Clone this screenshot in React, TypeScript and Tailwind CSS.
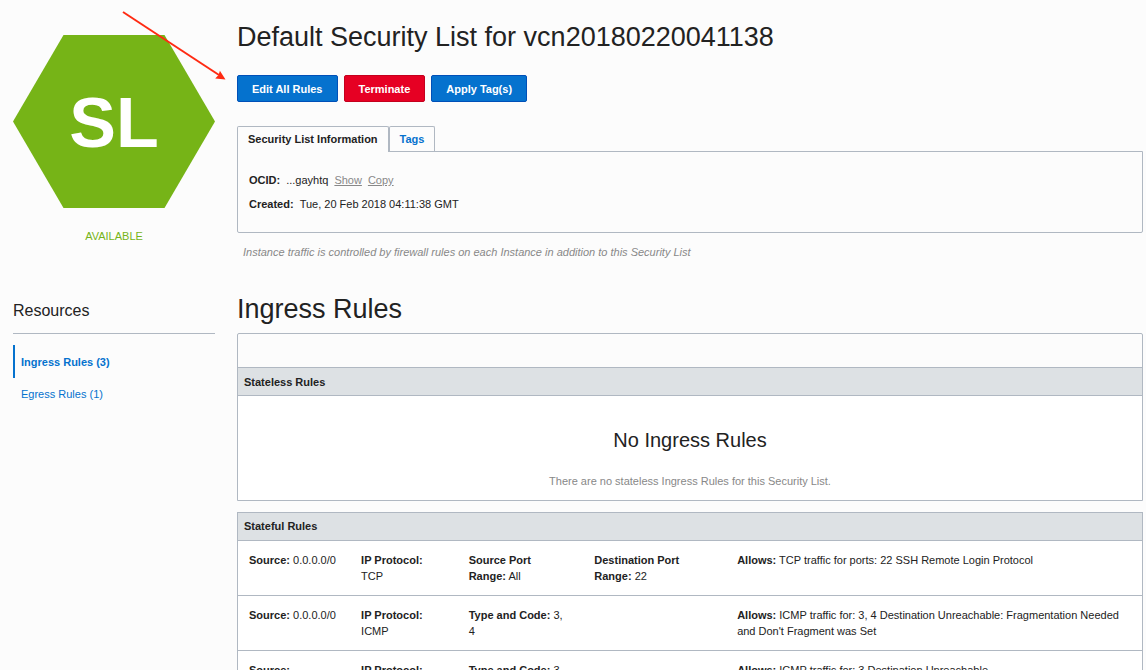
import type { ReactNode } from "react";

type Field = { label: string; value?: string } | null;

const statefulRules: Field[][] = [
  [
    { label: "Source:", value: "0.0.0.0/0" },
    { label: "IP Protocol:", value: "TCP" },
    { label: "Source Port Range:", value: "All" },
    { label: "Destination Port Range:", value: "22" },
    { label: "Allows:", value: "TCP traffic for ports: 22 SSH Remote Login Protocol" },
  ],
  [
    { label: "Source:", value: "0.0.0.0/0" },
    { label: "IP Protocol:", value: "ICMP" },
    { label: "Type and Code:", value: "3, 4" },
    null,
    {
      label: "Allows:",
      value:
        "ICMP traffic for: 3, 4 Destination Unreachable: Fragmentation Needed and Don't Fragment was Set",
    },
  ],
  [
    { label: "Source:" },
    { label: "IP Protocol:" },
    { label: "Type and Code:", value: "3" },
    null,
    { label: "Allows:", value: "ICMP traffic for: 3 Destination Unreachable" },
  ],
];

function ActionButton({ danger = false, children }: { danger?: boolean; children: ReactNode }) {
  return (
    <button
      type="button"
      className={
        danger
          ? "h-[27px] rounded-xs border border-[#c4001d] bg-[#e60023] px-[14px] font-bold text-white"
          : "h-[27px] rounded-xs border border-[#0050b8] bg-[#0572ce] px-[14px] font-bold text-white"
      }
    >
      {children}
    </button>
  );
}

function Sidebar() {
  return (
    <aside className="w-[202px] shrink-0 pt-[35px]">
      <div className="grid place-items-center">
        <svg viewBox="0 0 202 173" className="col-start-1 row-start-1 block w-full" aria-hidden="true">
          <path d="M0 86.5 50.5 0h101L202 86.5 151.5 173h-101z" fill="#76b417" />
        </svg>
        <span className="col-start-1 row-start-1 pt-0.5 text-[70px] leading-[70px] font-bold text-white">SL</span>
      </div>
      <p className="mt-5 text-center text-[#76b417]">AVAILABLE</p>
      <h2 className="mt-[55px] border-b border-[#b0b8c2] pb-[11px] text-base leading-[23px]">Resources</h2>
      <nav className="mt-[11px] flex flex-col text-[#0572ce]">
        <a href="#ingress" className="border-l-2 border-[#0572ce] pt-[9px] pb-2 pl-1.5 font-bold">
          Ingress Rules (3)
        </a>
        <a href="#egress" className="border-l-2 border-transparent py-2 pl-1.5">
          Egress Rules (1)
        </a>
      </nav>
    </aside>
  );
}

function Information() {
  return (
    <section className="mt-6">
      <div className="flex" role="tablist">
        <button
          type="button"
          role="tab"
          aria-selected="true"
          className="z-10 h-[26px] rounded-t-xs border border-b-0 border-[#b0b8c2] bg-[#fcfcfc] px-2.5 pb-px font-bold"
        >
          Security List Information
        </button>
        <button
          type="button"
          role="tab"
          aria-selected="false"
          className="h-[25px] rounded-t-xs border border-b-0 border-[#b0b8c2] px-2.5 font-bold text-[#0572ce]"
        >
          Tags
        </button>
      </div>
      <div className="-mt-px flex flex-col gap-2 rounded-b-xs border border-[#b0b8c2] px-[11px] py-5">
        <p className="flex gap-1.5">
          <strong>OCID:</strong>
          <span>...gayhtq</span>
          <a href="#show" className="text-[#888] underline">Show</a>
          <a href="#copy" className="text-[#888] underline">Copy</a>
        </p>
        <p className="flex gap-1.5">
          <strong>Created:</strong>
          <span>Tue, 20 Feb 2018 04:11:38 GMT</span>
        </p>
      </div>
    </section>
  );
}

function StatefulRules() {
  return (
    <div className="mt-[11px] border border-[#b0b8c2] bg-white">
      <table className="w-full table-fixed border-separate border-spacing-0">
        <colgroup>
          <col className="w-[12.4%]" />
          <col className="w-[11.9%]" />
          <col className="w-[13.9%]" />
          <col className="w-[15.8%]" />
          <col />
        </colgroup>
        <thead>
          <tr>
            <th
              colSpan={5}
              className="border-b border-[#b0b8c2] bg-[#dde1e4] px-1.5 pt-[5px] pb-1.5 text-left font-bold"
            >
              Stateful Rules
            </th>
          </tr>
        </thead>
        <tbody>
          {statefulRules.map((rule, row) => (
            <tr key={row}>
              {rule.map((field, column) => (
                <td key={column} className="border-b border-[#b0b8c2] py-[11px] pr-3 pl-[11px] align-top">
                  {field && (
                    <>
                      <strong>{field.label}</strong> {field.value}
                    </>
                  )}
                </td>
              ))}
            </tr>
          ))}
        </tbody>
      </table>
    </div>
  );
}

export default function App() {
  return (
    <div className="relative flex min-h-screen gap-[22px] bg-[#fcfcfc] pr-[3px] pl-[13px] font-['Liberation_Sans',Arial,sans-serif] text-[11px] leading-4 text-[#222]">
      <Sidebar />
      <main className="min-w-0 grow pt-[19px]">
        <h1 className="text-[27px] leading-9">Default Security List for vcn20180220041138</h1>
        <div className="mt-5 flex gap-1.5">
          <ActionButton>Edit All Rules</ActionButton>
          <ActionButton danger>Terminate</ActionButton>
          <ActionButton>Apply Tag(s)</ActionButton>
        </div>
        <Information />
        <p className="mt-[11px] px-1.5 text-[#888] italic">
          Instance traffic is controlled by firewall rules on each Instance in addition to this Security List
        </p>
        <h2 id="ingress" className="mt-[31px] text-[27px] leading-9">Ingress Rules</h2>
        <section className="mt-1.5 rounded-t-xs border border-[#b0b8c2]">
          <div className="h-[33px]" />
          <h3 className="border-y border-[#b0b8c2] bg-[#dde1e4] px-1.5 pt-1.5 pb-[5px] font-bold">
            Stateless Rules
          </h3>
          <div className="bg-white pt-8 pb-[11px] text-center">
            <p className="text-xl leading-6">No Ingress Rules</p>
            <p className="mt-[21px] text-[#888]">There are no stateless Ingress Rules for this Security List.</p>
          </div>
        </section>
        <StatefulRules />
      </main>
      <svg
        viewBox="0 0 106 72"
        className="pointer-events-none absolute top-[10px] left-[121px] z-20 w-[106px]"
        aria-hidden="true"
      >
        <path d="M2 2 98 65" stroke="#ff2a12" strokeWidth="2" fill="none" />
        <path d="M104.5 69.5 94.2 68.4 97.6 64.9 98.9 60.8z" fill="#ff2a12" />
      </svg>
    </div>
  );
}
